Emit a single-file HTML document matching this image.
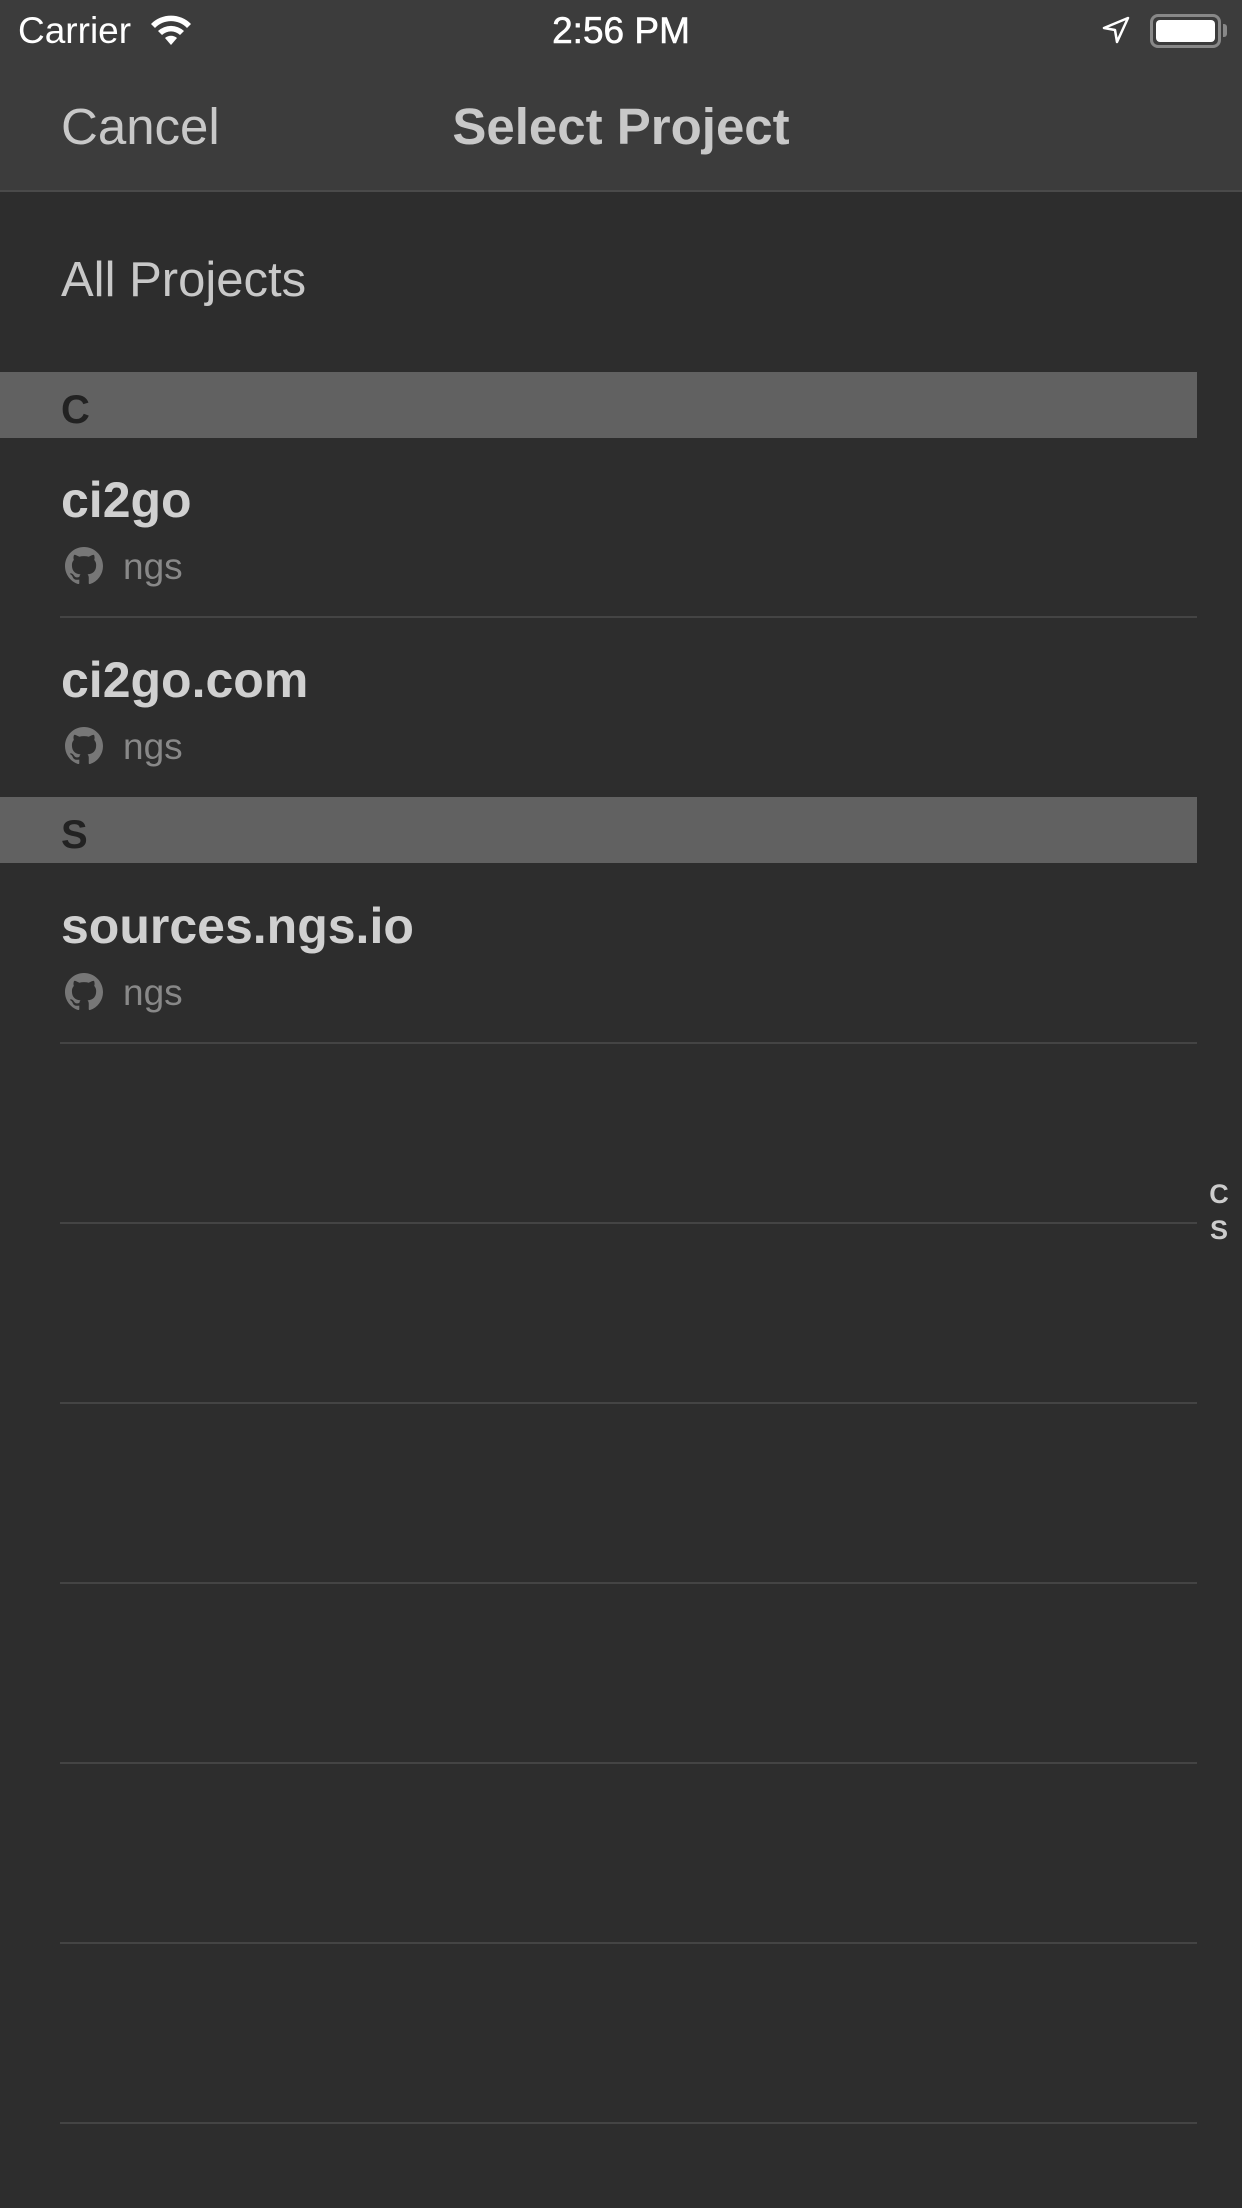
<!DOCTYPE html>
<html><head><meta charset="utf-8"><style>
*{margin:0;padding:0;box-sizing:border-box}
body{width:1242px;height:2208px;background:#2d2d2d;font-family:"Liberation Sans",sans-serif;position:relative;overflow:hidden}
.nav{position:absolute;left:0;top:0;width:1242px;height:192px;background:#3c3c3c;border-bottom:2px solid #4a4a4a}
.abs{position:absolute;white-space:nowrap}
.sec{position:absolute;left:0;width:1197px;height:66px;background:#616161}
.sec span{position:absolute;left:61px;top:16px;font-size:40px;font-weight:bold;color:#222}
.sep{position:absolute;left:60px;width:1137px;height:2px;background:#444}
.title{position:absolute;left:61px;font-size:50px;font-weight:bold;color:#d0d0d0}
.sub{position:absolute;left:123px;font-size:37px;color:#888}
.gh{position:absolute;left:65px;width:38px;height:38px}
</style></head><body>
<svg width="0" height="0" style="position:absolute"><defs><path id="g" fill="#777" d="M8 0C3.58 0 0 3.58 0 8c0 3.54 2.29 6.53 5.47 7.59.4.07.55-.17.55-.38 0-.19-.01-.82-.01-1.49-2.01.37-2.53-.49-2.69-.94-.09-.23-.48-.94-.82-1.13-.28-.15-.68-.52-.01-.53.63-.01 1.08.58 1.23.82.72 1.21 1.87.87 2.33.66.07-.52.28-.87.51-1.07-1.78-.2-3.64-.89-3.64-3.95 0-.87.31-1.59.82-2.15-.08-.2-.36-1.02.08-2.12 0 0 .67-.21 2.2.82.64-.18 1.32-.27 2-.27.68 0 1.36.09 2 .27 1.53-1.04 2.2-.82 2.2-.82.44 1.1.16 1.92.08 2.12.51.56.82 1.27.82 2.15 0 3.07-1.87 3.75-3.65 3.95.29.25.54.73.54 1.48 0 1.07-.01 1.93-.01 2.2 0 .21.15.46.55.38A8.013 8.013 0 0016 8c0-4.42-3.58-8-8-8z"/></defs></svg>
<div class="nav">
 <div class="abs" style="left:18px;top:10px;font-size:37px;color:#fff">Carrier</div>
 <svg class="abs" style="left:150px;top:14px" width="42" height="32" viewBox="0 0 42 32"><path d="M21 31 L15 24 A9 9 0 0 1 27 24Z" fill="#fff"/><path d="M8 17 A19 19 0 0 1 34 17 L30 21 A13 13 0 0 0 12 21Z" fill="#fff"/><path d="M1 10 A28 28 0 0 1 41 10 L37 14 A22 22 0 0 0 5 14Z" fill="#fff"/></svg>
 <div class="abs" style="left:0;width:1242px;text-align:center;top:10px;font-size:37px;color:#fff;-webkit-text-stroke:0.6px #fff">2:56 PM</div>
 <svg class="abs" style="left:1102px;top:16px" width="28" height="28" viewBox="0 0 28 28"><path d="M26 2 L2 12 L13 14 L15 26 Z" fill="none" stroke="#fff" stroke-width="2.5" stroke-linejoin="round"/></svg>
 <div class="abs" style="left:1150px;top:14px;width:71px;height:34px;border:3px solid #888;border-radius:8px;padding:3px"><div style="width:100%;height:100%;background:#fff;border-radius:4px"></div></div>
 <div class="abs" style="left:1223px;top:24px;width:4px;height:13px;background:#888;border-radius:0 3px 3px 0"></div>
 <div class="abs" style="left:61px;top:97px;font-size:51px;color:#c8c8c8">Cancel</div>
 <div class="abs" style="left:0;width:1242px;text-align:center;top:97px;font-size:51px;font-weight:bold;color:#c8c8c8">Select Project</div>
</div>
<div class="abs" style="left:61px;top:252px;font-size:49px;color:#c8c8c8">All Projects</div>
<div class="sec" style="top:372px"><span>C</span></div>
<div class="sec" style="top:797px"><span>S</span></div>
<div class="title" style="top:471px">ci2go</div>
<div class="title" style="top:651px">ci2go.com</div>
<div class="title" style="top:897px">sources.ngs.io</div>
<div class="sub" style="top:546px">ngs</div>
<div class="sub" style="top:726px">ngs</div>
<div class="sub" style="top:972px">ngs</div>
<svg class="gh" style="top:547px" viewBox="0 0 16 16"><use href="#g"/></svg>
<svg class="gh" style="top:727px" viewBox="0 0 16 16"><use href="#g"/></svg>
<svg class="gh" style="top:973px" viewBox="0 0 16 16"><use href="#g"/></svg>
<div class="sep" style="top:616px"></div>
<div class="sep" style="top:1042px"></div>
<div class="sep" style="top:1222px"></div>
<div class="sep" style="top:1402px"></div>
<div class="sep" style="top:1582px"></div>
<div class="sep" style="top:1762px"></div>
<div class="sep" style="top:1942px"></div>
<div class="sep" style="top:2122px"></div>
<div class="abs" style="left:1206px;top:1176px;width:26px;text-align:center;font-size:27px;font-weight:bold;color:#ccc;line-height:36px">C<br>S</div>
</body></html>
